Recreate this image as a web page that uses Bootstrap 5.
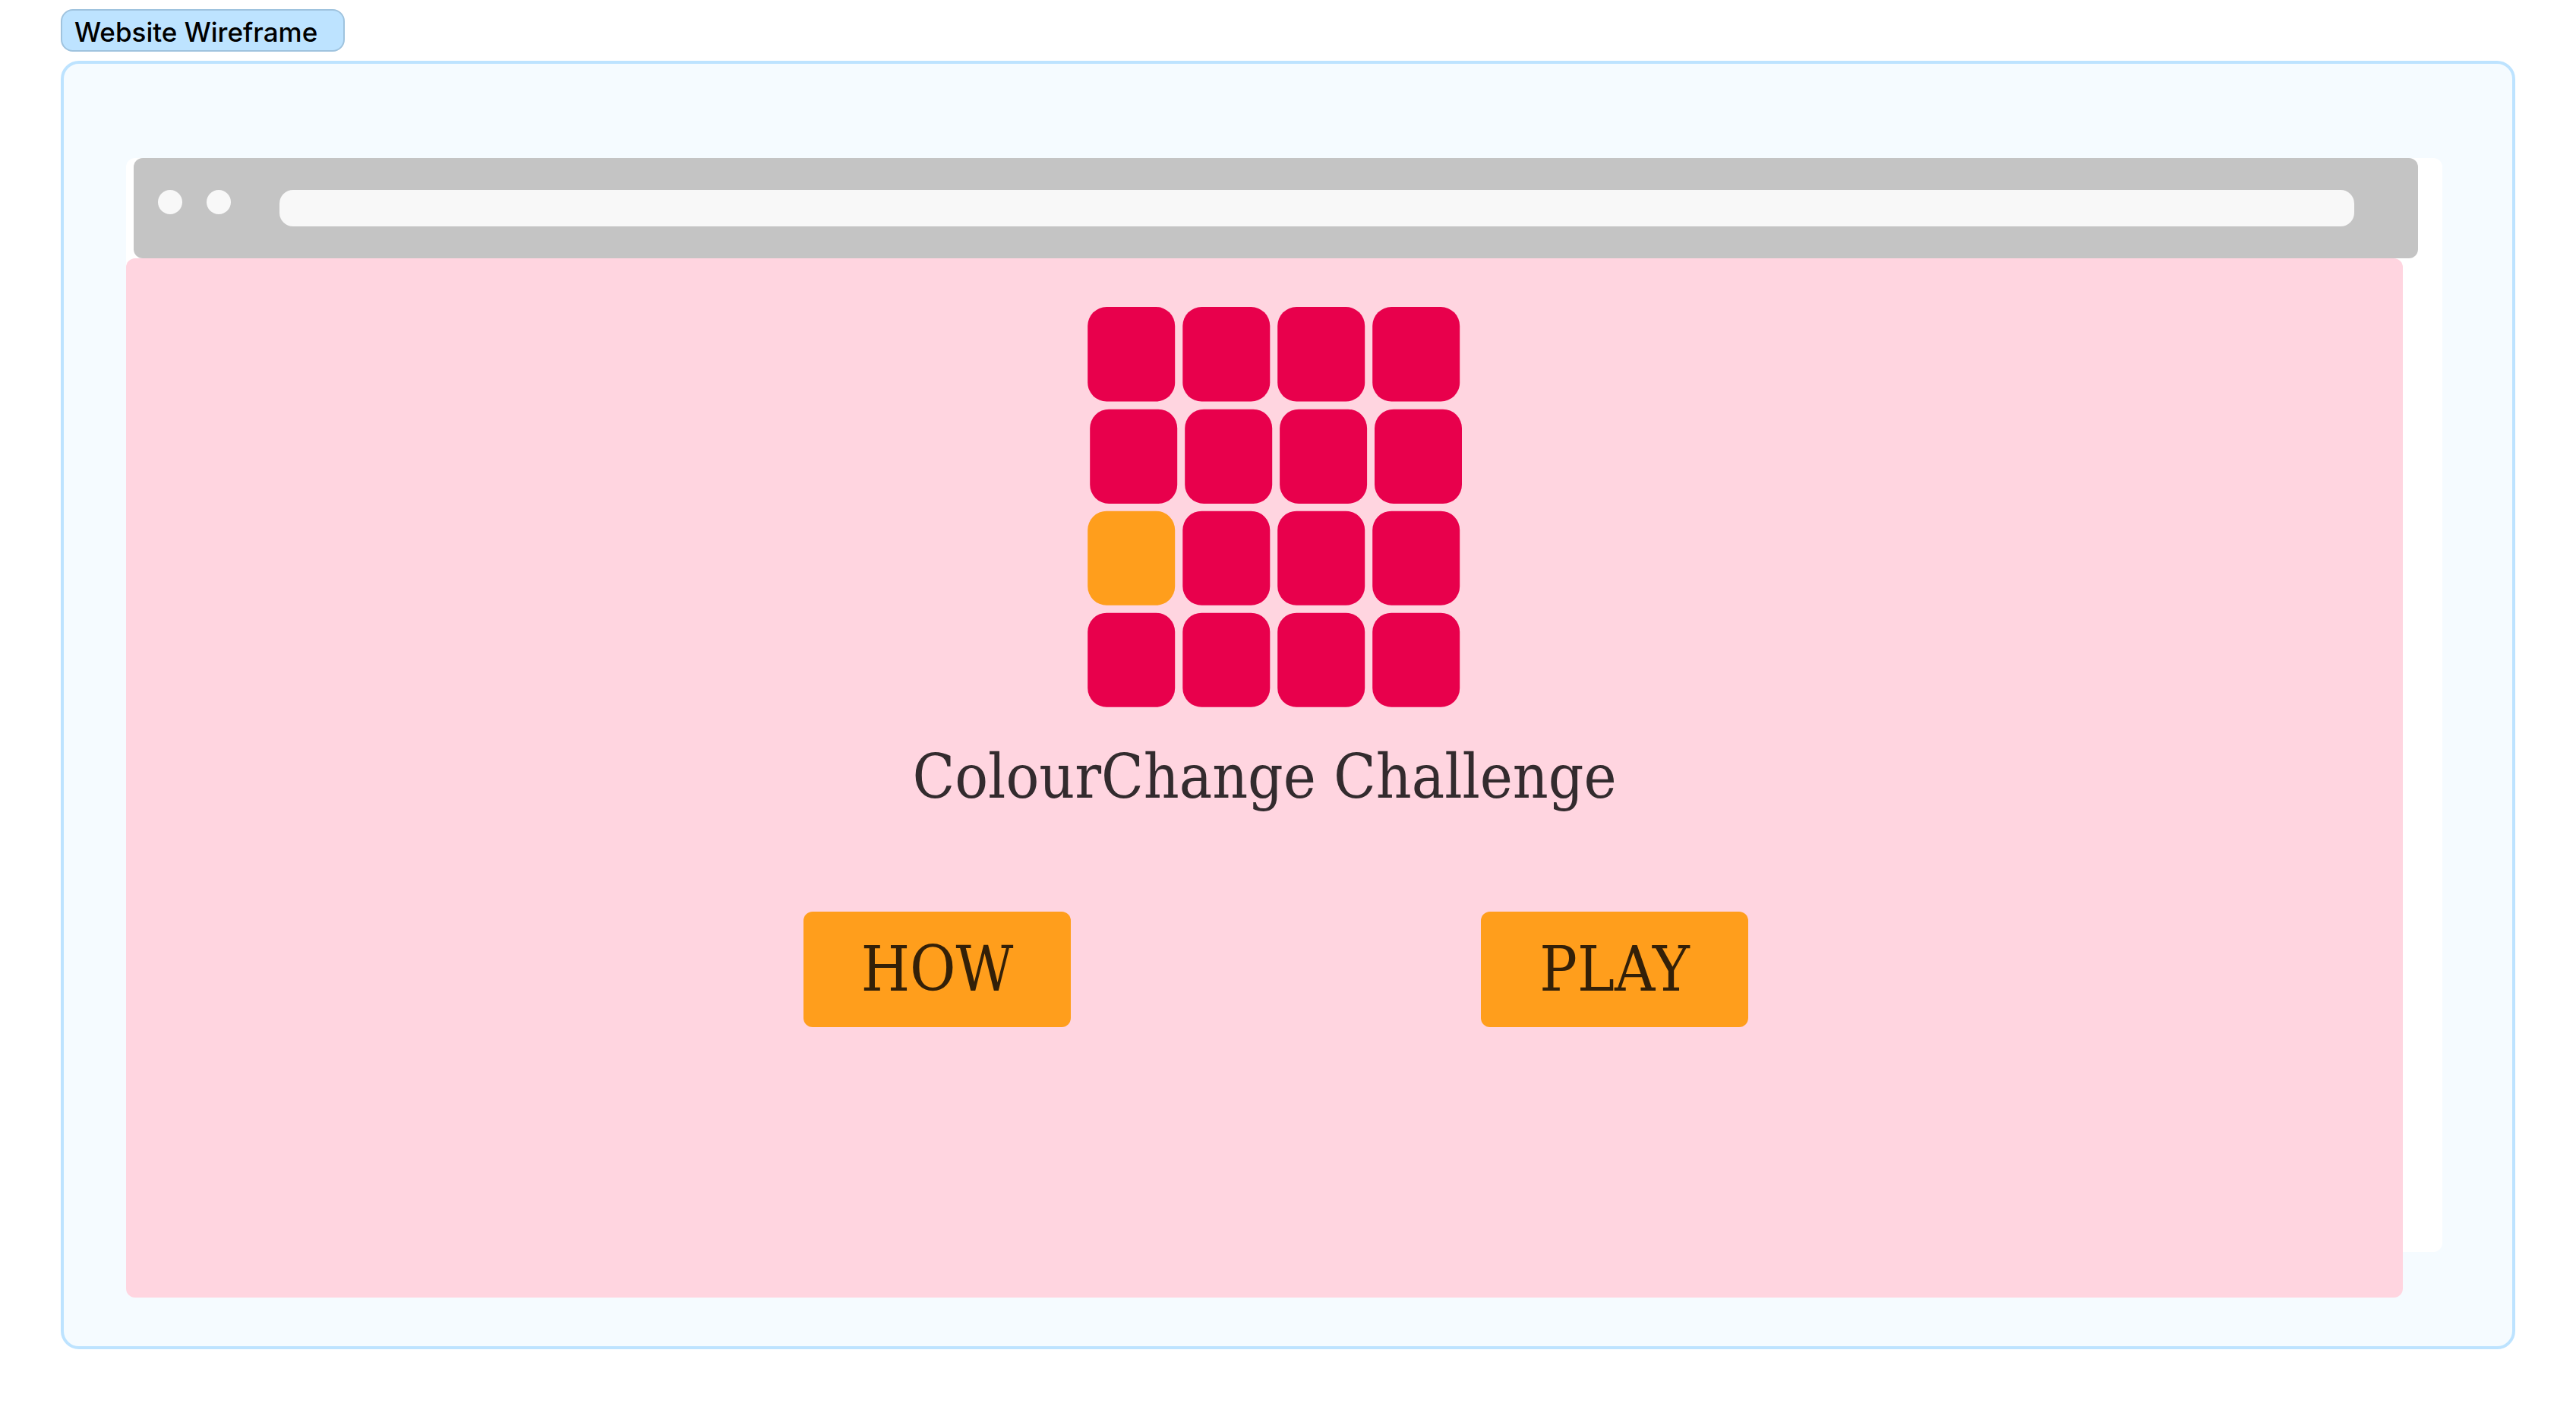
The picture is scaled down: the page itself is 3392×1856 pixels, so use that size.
<!DOCTYPE html>
<html lang="en">
<head>
<meta charset="utf-8">
<meta name="viewport" content="width=device-width, initial-scale=1">
<title>Website Wireframe</title>
<link href="https://cdn.jsdelivr.net/npm/bootstrap@5.3.0/dist/css/bootstrap.min.css" rel="stylesheet">
<style>
  body { background: #fff; }
  .board { padding: 12px 80px 80px; }
  .section-tag {
    padding: 4px 34px 0 16px;
    border: 2px solid #9fc3de;
    border-radius: 16px;
    background: #bde3ff;
    color: #000;
    font: 500 35px/48px Inter, "Liberation Sans", sans-serif;
  }
  .section-panel {
    margin-top: 12px;
    padding: 124px 92px 124px 82px;
    border: 4px solid #bde3ff;
    border-radius: 24px;
    background: #f5fbff;
  }
  .frame-sheet { border-radius: 12px; }
  .browser-bar {
    margin: 0 32px 0 10px;
    padding: 42px 84px 42px 32px;
    border-radius: 12px;
    background: #c4c4c4;
  }
  .browser-dots { gap: 32px; margin-right: 64px; }
  .browser-dot { width: 32px; height: 32px; background: #f8f8f8; }
  .address-box {
    height: 48px;
    border: 0;
    border-radius: 18px;
    background: #f8f8f8;
  }
  /* the page runs past the lower edge of the white sheet */
  .game-page {
    margin: 0 52px -60px 0;
    padding: 64px 0 356px;
    border-radius: 12px;
    background: #ffd5e0;
    font-family: "DejaVu Serif Condensed", "DejaVu Serif", serif;
  }
  .tile-logo { width: 496px; height: 528px; margin-left: 30px; }
  .game-title {
    margin: 40px 0 128px;
    color: #332b2e;
    font-size: 81px;
    line-height: 100px;
    font-weight: 400;
  }
  .game-actions { gap: 540px; margin-left: 30px; }
  .game-btn, .game-btn:hover {
    width: 352px;
    height: 152px;
    padding: 0;
    border: 0;
    border-radius: 12px;
    background: #ff9e1c;
    color: #332008;
    font-size: 82px;
    line-height: 100px;
  }
</style>
<script src="https://cdn.jsdelivr.net/npm/bootstrap@5.3.0/dist/js/bootstrap.bundle.min.js"></script>
</head>
<body>
<main class="board d-flex flex-column">
  <div class="section-tag align-self-start">Website Wireframe</div>
  <section class="section-panel">
    <div class="frame-sheet bg-white d-flex flex-column">
      <div class="browser-bar d-flex align-items-start">
        <div class="browser-dots d-flex">
          <span class="browser-dot rounded-circle"></span>
          <span class="browser-dot rounded-circle"></span>
        </div>
        <input class="address-box form-control flex-grow-1" type="text" aria-label="Address">
      </div>
      <div class="game-page d-flex flex-column align-items-center">
        <svg class="tile-logo" viewBox="0 0 496 528" fill="#e8004c" aria-hidden="true">
          <g>
            <rect x="0.2" y="0" width="115" height="124.5" rx="25" ry="25"/>
            <rect x="125.3" y="0" width="115" height="124.5" rx="25" ry="25"/>
            <rect x="250.2" y="0" width="115" height="124.5" rx="25" ry="25"/>
            <rect x="375.2" y="0" width="115" height="124.5" rx="25" ry="25"/>
          </g>
          <g>
            <rect x="3.2" y="134.7" width="115" height="124.3" rx="25" ry="25"/>
            <rect x="128.2" y="134.7" width="115" height="124.3" rx="25" ry="25"/>
            <rect x="253.1" y="134.7" width="115" height="124.3" rx="25" ry="25"/>
            <rect x="378" y="134.7" width="115" height="124.3" rx="25" ry="25"/>
          </g>
          <g>
            <rect x="0.2" y="268.7" width="115" height="124" rx="25" ry="25" fill="#ff9e1c"/>
            <rect x="125.3" y="268.7" width="115" height="124" rx="25" ry="25"/>
            <rect x="250.2" y="268.7" width="115" height="124" rx="25" ry="25"/>
            <rect x="375.2" y="268.7" width="115" height="124" rx="25" ry="25"/>
          </g>
          <g>
            <rect x="0.2" y="402.7" width="115" height="124" rx="25" ry="25"/>
            <rect x="125.3" y="402.7" width="115" height="124" rx="25" ry="25"/>
            <rect x="250.2" y="402.7" width="115" height="124" rx="25" ry="25"/>
            <rect x="375.2" y="402.7" width="115" height="124" rx="25" ry="25"/>
          </g>
        </svg>
        <h1 class="game-title">ColourChange Challenge</h1>
        <div class="game-actions d-flex">
          <button type="button" class="game-btn btn">HOW</button>
          <button type="button" class="game-btn btn">PLAY</button>
        </div>
      </div>
    </div>
  </section>
</main>
</body>
</html>
